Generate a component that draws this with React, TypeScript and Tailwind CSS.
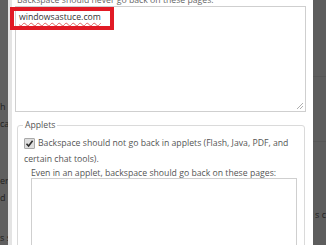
import React from "react";

function Grip() {
  return (
    <svg width="8" height="8" viewBox="0 0 8 8" className="absolute right-[1px] bottom-[1px]">
      <line x1="7" y1="1" x2="1" y2="7" stroke="#9a9a9a" strokeWidth="0.8" />
      <line x1="7" y1="4" x2="4" y2="7" stroke="#9a9a9a" strokeWidth="0.8" />
    </svg>
  );
}

function Check() {
  return (
    <span className="inline-flex align-[-2px] w-[11px] h-[11px] mr-[3px] border border-[#a9a9a9] bg-[#dedede] rounded-[1px] items-center justify-center">
      <svg width="9" height="9" viewBox="0 0 9 9">
        <path d="M1.5 4.8 L3.6 7 L7.6 1.8" fill="none" stroke="#2b2b2b" strokeWidth="1.6" />
      </svg>
    </span>
  );
}

export default function App() {
  return (
    <div
      className="flex w-[326px] h-[245px] overflow-hidden bg-white text-[#555]"
      style={{ fontFamily: '"Open Sans", "Noto Sans", sans-serif' }}
    >
      <div className="w-[8px] shrink-0 bg-[#5f5f5f] text-[#222] text-[9px] leading-[12px] overflow-hidden flex flex-col whitespace-nowrap">
        <div className="mt-[101px]">h</div>
        <div className="mt-[5px]">ca</div>
        <div className="mt-[45px]">er</div>
        <div className="mt-[5px]">d</div>
        <div className="mt-[28px]">s s</div>
      </div>
      <div className="w-[4px] shrink-0 bg-[#e4e4e4]" />
      <div className="flex-1 min-w-0 flex flex-col pl-[3px] pr-[7px] text-[8.7px] leading-[11px]">
        <div className="shrink-0 mt-[-5px] ml-[2px] h-[11px] whitespace-nowrap text-[#666]">
          Backspace should never go back on these pages:
        </div>
        <div className="relative h-[106px] shrink-0 border border-[#cfcfcf]">
          <div className="absolute left-[-6px] top-[0px] w-[104px] h-[23px] border-[4px] border-[#e11a25]" />
          <div className="pl-[3px] pt-[5px] text-[#333] underline decoration-wavy decoration-[#e06060] decoration-[0.5px] underline-offset-[2px]">
            windowsastuce.com
          </div>
          <Grip />
        </div>
        <fieldset className="shrink-0 mt-[8px] ml-[2px] mr-[1px] h-[140px] border border-[#dadada] rounded-[3px] pb-0 pl-[6px] pr-[6px] pt-[4px]">
          <legend className="ml-[-1px] px-[2px] text-[#555]">Applets</legend>
          <div className="leading-[16px]">
            <Check />
            Backspace should not go back in applets (Flash, Java, PDF, and certain chat tools).
          </div>
          <div className="ml-[7px] mt-[1px]">Even in an applet, backspace should go back on these pages:</div>
          <div className="ml-[7px] mr-[1px] mt-[-1px] h-[80px] border border-[#cfcfcf]" />
        </fieldset>
      </div>
      <div className="w-[13px] shrink-0 bg-[#5d5d5d] flex flex-col text-[9px] text-[#222] whitespace-nowrap">
        <div className="mt-[76px] h-[1px] bg-[#565656]" />
        <div className="mt-[64px] h-[1px] bg-[#565656]" />
        <div className="mt-[66px] pl-[2px]">s c</div>
      </div>
    </div>
  );
}
